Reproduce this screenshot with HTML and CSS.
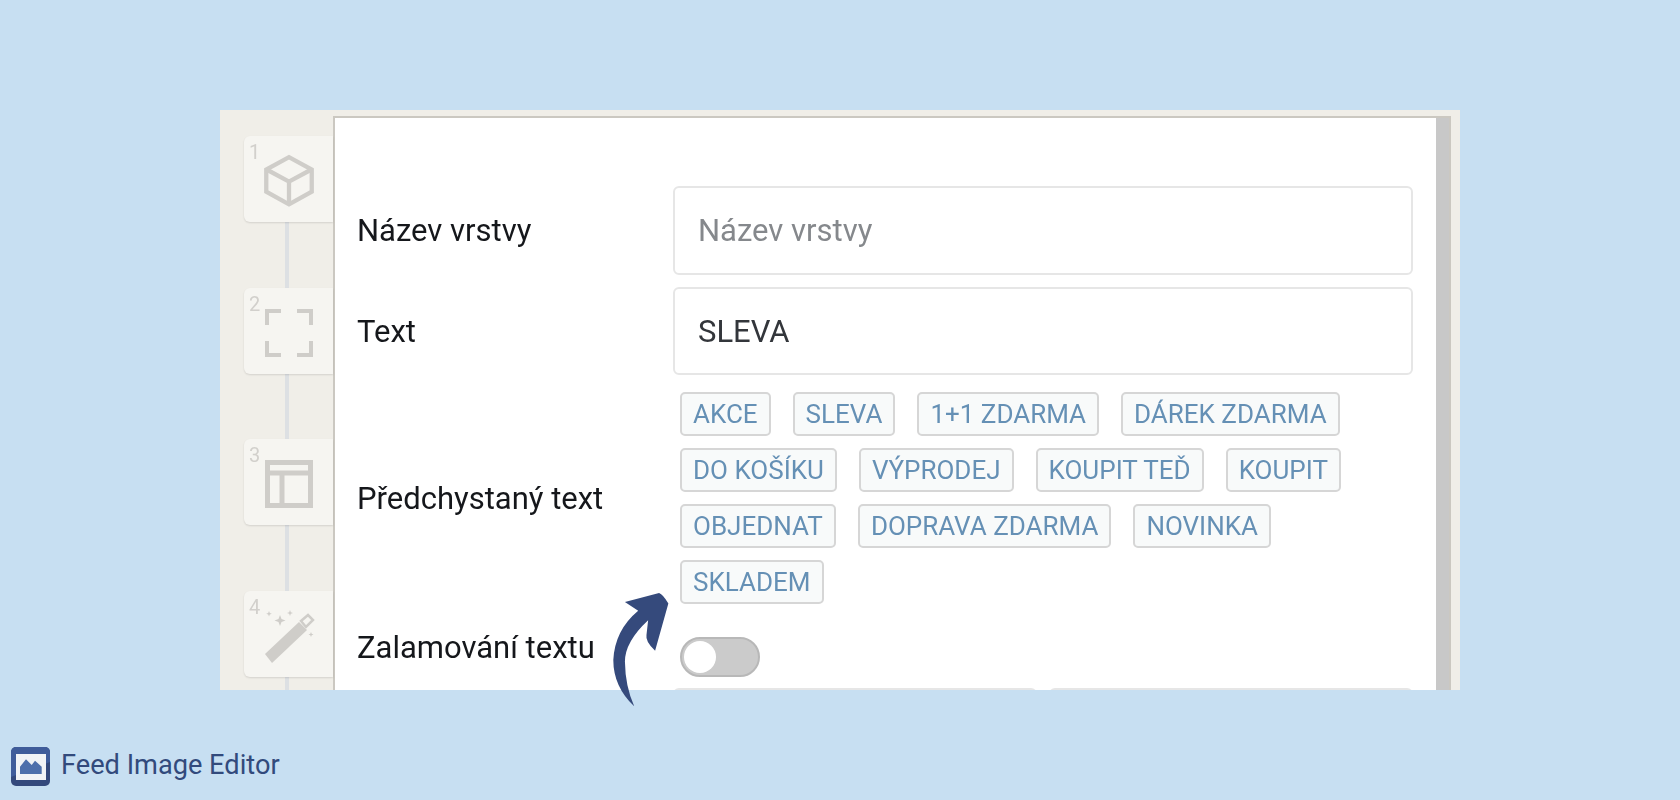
FILE: index.html
```html
<!DOCTYPE html>
<html lang="cs">
<head>
<meta charset="utf-8">
<title>Feed Image Editor</title>
<link rel="stylesheet" href="styles.css">
</head>
<body>
<main class="page">
  <section class="shot">
    <aside class="steps">
      <div class="step"><span class="num">1</span>
        <svg class="ico" viewBox="2.500 2 19 20.500"><path class="st" stroke-width="1.700" d="M21 16.500V7.700L12 2.800 3 7.700v8.800l9 5z"/><path class="st" stroke-width="1.700" d="M3.300 7.800 12 12.500l8.700-4.700M12 21.500v-9"/></svg>
      </div>
      <div class="step"><span class="num">2</span>
        <svg class="ico" viewBox="0 -2 48 52"><path class="st" stroke-width="4" d="M16 2H2v14M32 2h14v14M2 32v14h14M46 32v14H32"/></svg>
      </div>
      <div class="step"><span class="num">3</span>
        <svg class="ico" viewBox="0 -2 48 52"><path class="st" stroke-width="5" d="M2.500 2.500h43v43h-43zM2.500 13h43M17 13v32.500"/></svg>
      </div>
      <div class="step"><span class="num">4</span>
        <svg class="ico" viewBox="0 0 48 52"><path class="fl" d="M0 44 34 12l8 8L7 53z"/><path class="lt" d="M36 11l7-6 5 5-7 7z"/><path class="fl" d="M15 5l1.500 4 4 1.500-4 1.500-1.500 4-1.500-4-4-1.500 4-1.500zM25 0l.8 2.200 2.200.8-2.200.8-.8 2.200-.8-2.200-2.200-.8 2.200-.8zM4 1l.8 2 2 .8-2 .8-.8 2-.8-2-2-.8 2-.8zM46 22l.7 1.800 1.800.7-1.800.7-.7 1.800-.7-1.800-1.800-.7 1.800-.7z"/></svg>
      </div>
    </aside>
    <div class="panel">
      <form class="form">
        <label class="lbl">Název vrstvy</label>
        <div class="field placeholder">Název vrstvy</div>
        <label class="lbl">Text</label>
        <div class="field">SLEVA</div>
        <label class="lbl lbl-chips">Předchystaný text</label>
        <div class="chips">
          <span class="chip">AKCE</span><span class="chip">SLEVA</span><span class="chip">1+1 ZDARMA</span><span class="chip">DÁREK ZDARMA</span>
          <span class="chip">DO KOŠÍKU</span><span class="chip">VÝPRODEJ</span><span class="chip">KOUPIT TEĎ</span><span class="chip">KOUPIT</span>
          <span class="chip">OBJEDNAT</span><span class="chip">DOPRAVA ZDARMA</span><span class="chip">NOVINKA</span>
          <span class="chip">SKLADEM</span>
        </div>
        <label class="lbl lbl-wrap">Zalamování textu</label>
        <div class="toggle-cell"><span class="toggle"><span class="knob"></span></span></div>
        <div class="split"><div class="field"></div><div class="field"></div></div>
      </form>
      <div class="scrollbar"></div>
    </div>
    <div class="edge"></div>
  </section>
  <svg class="arrow" viewBox="90 60 190 360"><path d="M135 95 238 68Q250 72 266 100L226 242Q196 215 200 195L205 150Q135 215 135 275 136 350 163 410 100 350 100 270 105 180 175 122Z"/></svg>
  <footer class="brand">
    <svg class="logo" viewBox="0 0 39 39"><rect width="39" height="39" rx="5" fill="#34497c"/><path d="M0 5a5 5 0 0 1 5-5h29a5 5 0 0 1 5 5v10L0 30z" fill="#3f5c9a"/><rect x="5" y="7" width="30" height="26" fill="#f1f3f6"/><path d="M9 27v-7.300l6-7.400 5.700 5.700 3.300-4.300 6.700 6V27z" fill="#4d6fab"/></svg>
    <span class="brand-name">Feed Image Editor</span>
  </footer>
</main>
</body>
</html>
```
FILE: styles.css
```css
* { box-sizing: border-box; }
html, body { margin: 0; height: 100%; }
body { background: #c7dff2; font-family: Roboto, "Liberation Sans", sans-serif; overflow: hidden; }
.page { position: relative; width: 1680px; height: 800px; padding-top: 110px; }
.shot { width: 1240px; height: 580px; margin-left: 220px; display: flex; overflow: hidden; background: #f0eee8; filter: blur(.55px); }
.steps { position: relative; width: 113px; flex: none; padding: 26px 0 0 24px; display: flex; flex-direction: column; gap: 65.500px; }
.steps::before { content: ""; position: absolute; left: 65px; top: 100px; bottom: 0; width: 4px; background: #dde0e3; }
.step { position: relative; width: 89px; height: 86px; background: #f6f5f1; border-radius: 6px 0 0 6px; box-shadow: 0 1px 2px rgba(0,0,0,.12); flex: none; display: flex; align-items: center; padding: 4px 0 0 21px; }
.num { position: absolute; left: 5px; top: 4px; font-size: 20px; line-height: 24px; color: #d2d0cc; }
.ico { width: 48px; height: 52px; overflow: visible; }
.st { fill: none; stroke: #cfcdc9; }
.fl { fill: #cfcdc9; }
.lt { fill: #f6f5f1; stroke: #cfcdc9; stroke-width: 2.500; }
.panel { width: 1118px; flex: none; margin-top: 6px; display: flex; background: #fff; border-top: 2px solid #cbc8c1; border-left: 2px solid #cbc8c1; border-right: 2px solid #cbc8c1; overflow: hidden; }
.form { flex: 1; min-width: 0; padding: 68px 23px 0 22px; display: grid; grid-template-columns: 316px 740px; grid-template-rows: 89px 88px 217px 60px auto; row-gap: 12px; align-items: center; align-content: start; }
.lbl { font-size: 31px; color: #15171b; }
.lbl-chips { margin-top: 5px; }
.lbl-wrap { align-self: start; padding-top: 13px; }
.field { height: 100%; border: 2px solid #e6e6e6; border-radius: 6px; padding-left: 23px; display: flex; align-items: center; font-size: 31px; color: #33363b; background: #fff; }
.placeholder { color: #85888c; }
.chips { padding: 5px 0 0 7px; display: flex; flex-wrap: wrap; gap: 12px 22px; align-content: start; align-self: start; }
.chip { height: 44px; border: 2px solid #d6d6d6; border-radius: 5px; background: #f8fafa; padding: 0 11px; display: flex; align-items: center; font-size: 26px; color: #6590b5; }
.toggle-cell { padding: 21px 0 0 7px; align-self: start; }
.toggle { display: block; width: 80px; height: 40px; border-radius: 20px; border: 2px solid #b8b8b8; background: #cbcbcb; padding: 2px; }
.knob { display: block; width: 32px; height: 32px; border-radius: 50%; background: #fff; }
.split { grid-column: 2; display: grid; grid-template-columns: 364px 364px; column-gap: 12px; height: 90px; }
.scrollbar { width: 13px; flex: none; background: #c8c8c8; }
.edge { flex: 1; }
.arrow { position: absolute; left: 610px; top: 590px; width: 63px; height: 120px; }
.arrow path { fill: #354a7c; }
.brand { position: absolute; left: 11px; top: 747px; display: flex; align-items: center; gap: 11px; }
.logo { width: 39px; height: 39px; }
.brand-name { font-size: 27.200px; color: #324a7c; margin-bottom: 3px; }
```
